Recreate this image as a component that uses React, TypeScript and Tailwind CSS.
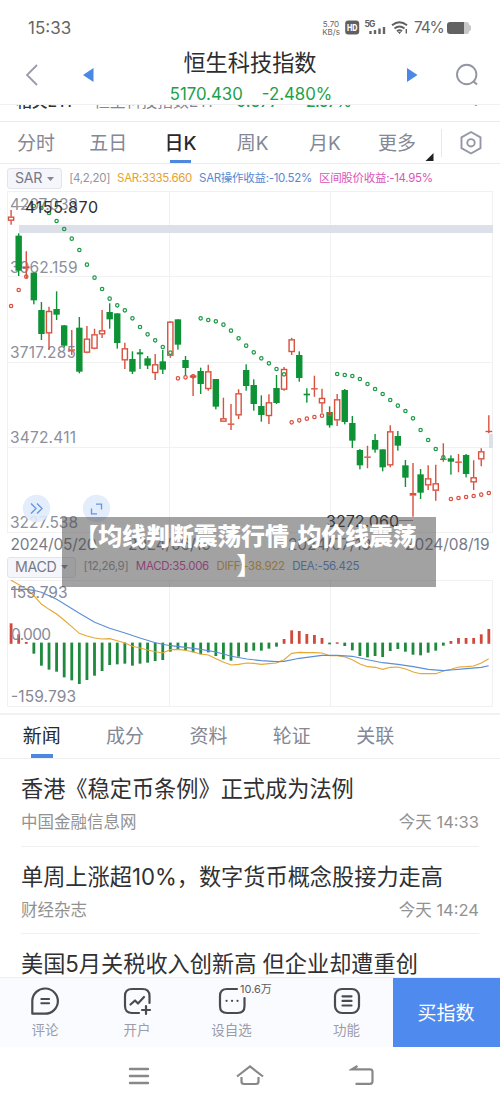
import React from "react";

type Candle = [kind: "r" | "g", top: number, bottom: number, high: number, low: number];

const STEP = 7.583;
const xAt = (i: number) => 11.1 + i * STEP;

const scale = (base: number, rows: Candle[]): Candle[] =>
  rows.map(([k, a, b, c, d]) => [k, base + a / 3, base + b / 3, base + c / 3, base + d / 3]);

const candles: Candle[] = [
  ...scale(190, [
    ["r", 80, 92, 60, 104], ["g", 137, 242, 130, 258], ["r", 229, 235, 184, 265], ["g", 248, 331, 248, 343],
    ["g", 360, 432, 336, 450], ["r", 363, 430, 350, 480], ["g", 357, 374, 304, 390], ["g", 406, 467, 405, 472],
    ["r", 478, 482, 420, 495], ["g", 413, 545, 381, 550], ["r", 446, 488, 408, 490], ["r", 433, 476, 416, 478],
    ["r", 421, 433, 360, 444], ["g", 366, 388, 340, 416], ["g", 370, 459, 370, 476], ["r", 475, 511, 458, 537],
    ["g", 507, 545, 484, 552], ["g", 487, 493, 477, 537], ["g", 505, 527, 498, 537], ["r", 523, 549, 492, 570],
    ["g", 514, 539, 480, 552],
  ]),
  ...scale(290, [
    ["r", 95, 197, 93, 203], ["g", 88, 164, 88, 179], ["g", 210, 234, 198, 258], ["r", 256, 263, 252, 318],
    ["g", 243, 282, 233, 312], ["r", 244, 297, 224, 302], ["g", 267, 350, 267, 358], ["r", 385, 395, 323, 395],
    ["r", 401, 404, 342, 420], ["r", 310, 376, 298, 387], ["g", 240, 288, 223, 302], ["g", 285, 342, 268, 362],
    ["g", 348, 375, 316, 395], ["r", 337, 378, 313, 402], ["g", 294, 339, 255, 342], ["r", 237, 299, 231, 302],
    ["r", 148, 186, 143, 195], ["g", 195, 264, 184, 275], ["g", 311, 316, 295, 338], ["r", 295, 298, 257, 320],
    ["r", 324, 340, 296, 368],
  ]),
  ...scale(350, [
    ["g", 186, 226, 169, 233], ["r", 148, 211, 132, 228], ["g", 120, 216, 117, 223], ["g", 219, 272, 198, 294],
    ["g", 300, 346, 297, 358], ["r", 320, 323, 287, 355], ["g", 270, 299, 252, 308], ["g", 298, 352, 298, 364],
    ["r", 244, 346, 226, 352], ["g", 258, 287, 243, 302], ["g", 346, 383, 330, 411], ["r", 429, 437, 339, 500],
    ["g", 373, 428, 357, 447], ["r", 385, 406, 346, 420], ["r", 400, 422, 344, 452], ["r", 326, 330, 280, 335],
    ["g", 325, 335, 316, 374], ["r", 335, 338, 312, 367], ["g", 315, 372, 312, 382], ["r", 382, 397, 331, 420],
    ["r", 304, 328, 295, 349], ["r", 243, 246, 196, 250],
  ]),
];

const sarRuns: { color: string; start: number; base: number; ys: number[] }[] = [
  { color: "#d9503f", start: 0, base: 190, ys: [348, 300, 260] },
  { color: "#1c9a46", start: 3, base: 190, ys: [48, 54, 69, 93, 117, 146, 180, 224, 263, 297, 326, 346, 361, 385, 411, 433, 451, 471, 488] },
  { color: "#d9503f", start: 22, base: 290, ys: [265, 262, 259] },
  { color: "#1c9a46", start: 25, base: 290, ys: [85, 90, 94, 104, 122, 145, 167, 187, 205, 220, 237, 253] },
  { color: "#d9503f", start: 37, base: 290, ys: [397, 391, 386, 381, 377, 372] },
  { color: "#1c9a46", start: 43, base: 350, ys: [72, 75, 78, 87, 102, 117, 132, 150, 167, 183, 205, 240, 270, 297, 322] },
  { color: "#d9503f", start: 58, base: 350, ys: [447, 444, 441, 438, 434, 429] },
];

const macdEnds = [
  160, 193, 216, 251, 287, 299, 305, 322, 331, 342, 330, 317, 303, 285, 283, 281, 287, 281, 278, 273, 270, 245, 237,
  240, 247, 253, 247, 258, 268, 272, 260, 246, 242, 242, 236, 230, 207, 181, 183, 192, 195, 204, 223, 217, 228, 241,
  258, 262, 258, 261, 243, 237, 245, 254, 256, 248, 242, 227, 213, 204, 204, 204, 193, 177,
];

const diff = [
  [33, 31], [57, 44], [79, 57], [101, 76], [124, 102], [147, 118], [170, 132], [192, 150], [215, 170], [238, 190],
  [261, 198], [284, 204], [306, 207], [329, 206], [352, 212], [375, 219], [397, 229], [420, 234], [443, 240],
  [466, 245], [488, 249], [511, 239], [534, 238], [557, 241], [580, 246], [602, 252], [625, 255], [648, 266],
  [671, 277], [694, 285], [716, 283], [740, 279], [761, 280], [784, 283], [807, 281], [829, 279], [852, 269],
  [875, 250], [898, 247], [920, 248], [943, 248], [966, 249], [989, 257], [1012, 257], [1035, 261], [1057, 269],
  [1080, 282], [1103, 290], [1126, 292], [1148, 298], [1171, 292], [1194, 291], [1217, 297], [1240, 306], [1262, 311],
  [1285, 311], [1308, 311], [1330, 303], [1353, 298], [1376, 291], [1399, 290], [1421, 288], [1444, 279], [1466, 266],
];
const dea = [
  [33, 58], [79, 58], [101, 61], [124, 67], [170, 88], [238, 130], [284, 157], [329, 175], [375, 189], [420, 204],
  [466, 218], [511, 227], [557, 232], [602, 238], [648, 246], [694, 259], [740, 267], [784, 272], [829, 275],
  [852, 274], [898, 265], [943, 259], [966, 256], [1012, 256], [1057, 259], [1103, 269], [1148, 278], [1194, 283],
  [1240, 290], [1285, 298], [1330, 302], [1353, 300], [1399, 296], [1444, 292], [1466, 287],
];
const toPoints = (pts: number[][]) => pts.map(([x, y]) => `${x / 3},${570 + y / 3}`).join(" ");

function PriceChart() {
  return (
    <svg width="500" height="365" viewBox="0 190 500 365" className="block shrink-0">
      <g stroke="#f1f1f4" fill="none">
        <rect x="7.5" y="191.5" width="485" height="341" />
        <path d="M169.5 192V532M330.5 192V532M8 276.5H492M8 362.5H492M8 447.5H492" />
      </g>
      <rect x="19" y="225" width="474" height="8" fill="#dbe0e9" />
      <rect x="489" y="434" width="4" height="14" fill="#dbe0e9" />
      <g fontSize="15.5" fill="#8d8f9c">
        <text x="10" y="209.5" textLength="68">4207.033</text>
        <text x="10" y="273" textLength="67.5">3962.159</text>
        <text x="10" y="358" textLength="66">3717.285</text>
        <text x="10" y="443" textLength="66">3472.411</text>
        <text x="10" y="528.3" textLength="68">3227.538</text>
      </g>
      {candles.map(([kind, top, bottom, high, low], i) => {
        const x = xAt(i);
        if (kind === "g") {
          return (
            <g key={i} fill="#0d9236">
              <rect x={x - 0.7} y={high} width="1.4" height={low - high} />
              <rect x={x - 3.2} y={top} width="6.4" height={bottom - top} />
            </g>
          );
        }
        const thin = bottom - top < 3;
        return (
          <g key={i} stroke="#d9503f" strokeWidth="1.4" fill={thin ? "#d9503f" : "white"}>
            <path d={`M${x} ${high}V${top}M${x} ${bottom}V${low}`} />
            {thin ? (
              <path d={`M${x - 3.3} ${(top + bottom) / 2}H${x + 3.3}`} strokeWidth={Math.max(1.4, bottom - top)} />
            ) : (
              <rect x={x - 2.6} y={top + 0.5} width="5.2" height={bottom - top - 1} />
            )}
          </g>
        );
      })}
      {sarRuns.map((run) =>
        run.ys.map((y, j) => (
          <circle key={`${run.start}-${j}`} cx={xAt(run.start + j)} cy={run.base + y / 3} r="1.7" fill="none" stroke={run.color} strokeWidth="1.2" />
        )),
      )}
      <path d="M16 206.5H27M399 520.5H413" stroke="#9a9a9a" />
      <g fontSize="16" fill="#2e2e30">
        <text x="25" y="212.5" textLength="73">4155.870</text>
        <text x="326" y="527" textLength="73">3272.060</text>
      </g>
      <g>
        <circle cx="36.5" cy="508.5" r="13.7" fill="#dfebfc" fillOpacity=".88" />
        <circle cx="96.5" cy="508.5" r="13.7" fill="#dfebfc" fillOpacity=".88" />
        <path d="M31 503.5l5 5-5 5M37 503.5l5 5-5 5M96 504.2h5.5v5.3M91.5 508.5v5.3h5.5" fill="none" stroke="#6096e4" strokeWidth="1.3" />
      </g>
      <g fontSize="15.5" fill="#787b8a">
        <text x="10.5" y="549.5" textLength="86">2024/05/20</text>
        <text x="128" y="549.5" textLength="83">2024/06/19</text>
        <text x="288" y="549.5" textLength="83">2024/07/19</text>
        <text x="405" y="549.5" textLength="84.5">2024/08/19</text>
      </g>
    </svg>
  );
}

function MacdChart() {
  return (
    <svg width="500" height="134" viewBox="0 579 500 134" className="block shrink-0">
      <g stroke="#f1f1f4" fill="none">
        <rect x="7.5" y="580.5" width="485" height="126" />
        <path d="M169.5 581V706M330.5 581V706" />
      </g>
      {macdEnds.map((v, i) => {
        const up = v < 220;
        const end = 570 + v / 3;
        return (
          <rect key={i} x={xAt(i) - 1.4} width="2.8" y={up ? end : 642.6} height={up ? 643.8 - end : end - 642.6} fill={up ? "#cf4a3d" : "#1f8a3e"} />
        );
      })}
      <polyline points={toPoints(diff)} fill="none" stroke="#e5a833" strokeWidth="1.1" />
      <polyline points={toPoints(dea)} fill="none" stroke="#5b8fd8" strokeWidth="1.1" />
      <g fontSize="15.5" fill="#878996">
        <text x="10.5" y="598" textLength="57">159.793</text>
        <text x="11" y="639.5" textLength="40">0.000</text>
        <text x="11" y="702" textLength="65">-159.793</text>
      </g>
    </svg>
  );
}

function StatusBar() {
  return (
    <div className="flex h-12 items-center pl-7 pr-7 pt-2 text-[#666]">
      <span className="text-[17px] leading-none">15:33</span>
      <div className="ml-auto flex items-center">
        <div className="w-[18px] text-center text-[8px] leading-[8px]">
          <div>5.70</div>
          <div>KB/s</div>
        </div>
        <svg width="70" height="18" viewBox="340 19 70 18">
          <rect x="345.2" y="20.5" width="14" height="14" rx="3" fill="#606060" />
          <text x="347" y="31" fontSize="9" fontWeight="800" fill="white" textLength="10.5" lengthAdjust="spacingAndGlyphs">HD</text>
          <text x="364.5" y="27.3" fontSize="8.5" fontWeight="700" fill="#606060" textLength="11">5G</text>
          <path d="M370.5 34v-3M375 34v-4M379.5 34v-5.5M384 34v-7" stroke="#666" strokeWidth="2.4" />
          <g fill="none" stroke="#606060" strokeWidth="2">
            <path d="M392 25.3q7.5-6 15 0M394.5 28.5q5-4 10 0M397 31.3q2.5-2 5 0" />
            <path d="M398.5 32.5h2l-1 1z" fill="#606060" strokeWidth="1" />
            <path d="M406.3 29v4.5" strokeWidth="1.4" />
          </g>
        </svg>
        <span className="ml-[4px] w-[28px] text-[15.5px] leading-none tracking-[-1.2px]">74%</span>
        <svg width="26" height="14" viewBox="0 0 26 14" className="ml-[4px]">
          <path d="M18 1h3q2 0 2 2.5l2 1.5v4l-2 1.5q0 2.5-2 2.5h-3z" fill="#c8c8c8" />
          <path d="M4 1h14v12H4q-3 0-3-3V4q0-3 3-3z" fill="#626262" />
        </svg>
      </div>
    </div>
  );
}

function Header() {
  return (
    <div className="flex h-[57px] items-start justify-between border-b border-[#f0f0f0] pl-6 pr-[22px]">
      <div className="flex w-[130px] items-center gap-[43px] pt-[15px]">
        <svg width="16" height="24" viewBox="0 0 16 24"><path d="M13 2L3 12l10 10" fill="none" stroke="#9a9cab" strokeWidth="1.8" /></svg>
        <svg width="12" height="16" viewBox="0 0 12 16"><path d="M10.5 1v14L0 8z" fill="#4a88e5" /></svg>
      </div>
      <div className="flex flex-col items-center">
        <h1 className="-ml-[2px] text-[22.2px] leading-[30px] text-[#2d2d2f]">恒生科技指数</h1>
        <div className="mt-[5px] flex gap-[19px] text-[16.8px] leading-[22px] text-[#1ca049]">
          <span>5170.430</span>
          <span>-2.480%</span>
        </div>
      </div>
      <div className="flex w-[130px] items-center justify-end gap-[38px] pt-[15px]">
        <svg width="12" height="16" viewBox="0 0 12 16"><path d="M1 1v14L11.5 8z" fill="#4a88e5" /></svg>
        <svg width="22" height="24" viewBox="0 0 22 24"><path d="M17 18l4 3.5" stroke="#9395a3" strokeWidth="2" /><circle cx="10.7" cy="11.5" r="9.7" fill="none" stroke="#9395a3" strokeWidth="1.9" /></svg>
      </div>
    </div>
  );
}

function Tag({ children }: { children: string }) {
  return (
    <div className="flex h-[21px] items-center gap-[4.5px] rounded-[3px] border border-[#e2e3ed] bg-[#f5f6fb] px-[7px] text-[14.2px] leading-none text-[#767987]">
      {children}
      <svg width="7" height="4" viewBox="0 0 7 4"><path d="M0 0h7L3.5 4z" fill="#858895" /></svg>
    </div>
  );
}

const periods = ["分时", "五日", "日K", "周K", "月K", "更多"];

function PeriodTabs() {
  return (
    <div className="flex h-[43px] shrink-0 items-stretch border-y border-[#ececf0] text-[19px] text-[#848795]">
      {periods.map((p, i) => (
        <div key={p} className={`relative flex w-[72.2px] items-center justify-center pt-[4px] ${i === 2 ? "font-medium text-[#28282a]" : ""}`}>
          {p}
          {i === 2 && <span className="absolute bottom-0 h-[3px] w-[21px] bg-[#4d88dc]" />}
        </div>
      ))}
      <div className="flex flex-1 items-center">
        <svg width="9" height="41" viewBox="0 0 9 41" className="-ml-[8px]"><path d="M8.5 31v8H.5z" fill="#202020" /></svg>
        <div className="ml-[7px] h-7 border-l border-[#e7e7f0]" />
        <svg width="24" height="26" viewBox="0 0 24 26" className="ml-[17px]" fill="none" stroke="#9597a5" strokeWidth="1.9">
          <path d="M12 2l9.5 5.3v10.8L12 23.5l-9.5-5.4V7.3z" /><circle cx="12" cy="12.8" r="3.7" />
        </svg>
      </div>
    </div>
  );
}

const news = [
  { title: "香港《稳定币条例》正式成为法例", source: "中国金融信息网", time: "今天 14:33" },
  { title: "单周上涨超10%，数字货币概念股接力走高", source: "财经杂志", time: "今天 14:24" },
];

function BottomBar() {
  const item = "flex flex-col items-center pt-[9px] text-[13.5px] leading-[18px] text-[#9a9ca9]";
  const line = { fill: "none", stroke: "#4b4b4d", strokeWidth: 2.2, strokeLinecap: "round" as const, strokeLinejoin: "round" as const };
  return (
    <div className="flex h-[70px] shrink-0 border-t border-[#eeeff5] bg-[#fafbff]">
      <div className={`${item} w-[90px]`}>
        <svg width="30" height="30" viewBox="0 0 30 30" {...line}><path d="M2.3 26.7V13.6A12.8 12.6 0 1 1 15 26.7z" /><path d="M11.3 12.1h7.8M11.3 16.2h7.8" strokeWidth="2" /></svg>
        <span className="mt-[4px]">评论</span>
      </div>
      <div className={`${item} w-[94px]`}>
        <svg width="30" height="30" viewBox="0 0 30 30" {...line}><path d="M17 26H10q-7 0-7-7V9q0-7 7-7h10.5q7 0 7 7v7M8.5 17.5l4.5-4 3 3 6-6.5" /><path d="M24 19v8M20 23h8" /></svg>
        <span className="mt-[4px]">开户</span>
      </div>
      <div className={`${item} relative w-[95px]`}>
        <svg width="30" height="30" viewBox="0 0 30 30" {...line}><path d="M20 2H10Q3 2 3 9v10q0 7 7 7h10.5q7 0 7-7V11" /><path d="M9.5 13.8h.1M15 13.8h.1M20.5 13.8h.1" /></svg>
        <span className="mt-[4px]">设自选</span>
        <span className="absolute left-[56px] top-[3px] whitespace-nowrap text-[11px] leading-[16px] text-[#5c5c60]">10.6万</span>
      </div>
      <div className={`${item} ml-[21px] w-[93px]`}>
        <svg width="30" height="30" viewBox="0 0 30 30" {...line}><rect x="3" y="2" width="24" height="24" rx="7" /><path d="M10.5 9.3h9M10.5 13.9h9M10.5 18.5h9" /></svg>
        <span className="mt-[4px]">功能</span>
      </div>
      <div className="flex flex-1 items-center justify-center bg-[#4f8bee] pr-[1px] pt-[4px] text-[19px] text-white">买指数</div>
    </div>
  );
}

export default function App() {
  return (
    <div className="relative flex h-[1105px] w-[500px] flex-col overflow-hidden bg-white font-['Inter','Noto_Sans_CJK_SC',sans-serif]">
      <StatusBar />
      <Header />
      <div className="flex h-[16px] shrink-0 items-end overflow-hidden">
        <div className="mb-[8.5px] flex w-full items-baseline whitespace-nowrap pl-[16px] text-[15.8px] leading-[22px]">
          <span className="w-[78px] font-medium text-[#333]">相关ETF</span>
          <span className="w-[142px] text-[#858794]">恒生科技指数ETF</span>
          <span className="w-[64px] font-medium text-[#1ca049]">0.677</span>
          <span className="font-medium tracking-[-0.8px] text-[#1ca049]">-2.67%</span>
          <span className="ml-auto mr-[20px] text-[#858794]">›</span>
        </div>
      </div>
      <PeriodTabs />
      <div className="flex h-[26px] shrink-0 items-center whitespace-nowrap pl-[7px] pt-[3px] text-[11.5px] tracking-[-0.3px]">
        <Tag>SAR</Tag>
        <span className="ml-[7.5px] text-[#92949e]">[4,2,20]</span>
        <span className="ml-[7px] text-[#e5a12d]">SAR:3335.660</span>
        <span className="ml-[7px] text-[#5489d6]">SAR操作收益:-10.52%</span>
        <span className="ml-[7px] text-[#d956b8]">区间股价收益:-14.95%</span>
      </div>
      <PriceChart />
      <div className="flex h-[24px] shrink-0 items-center whitespace-nowrap pl-[7px] text-[11.5px] tracking-[-0.3px]">
        <Tag>MACD</Tag>
        <span className="ml-[7.5px] text-[#92949e]">[12,26,9]</span>
        <span className="ml-[7.5px] text-[#d63dad]">MACD:35.006</span>
        <span className="ml-[7.5px] text-[#e5a12d]">DIFF:-38.922</span>
        <span className="ml-[7.5px] text-[#5489d6]">DEA:-56.425</span>
      </div>
      <MacdChart />
      <div className="flex h-[46px] shrink-0 border-b border-t-2 border-b-[#efeff2] border-t-[#f1f1f4] text-[19px] text-[#848795]">
        {["新闻", "成分", "资料", "轮证", "关联"].map((t, i) => (
          <div key={t} className={`relative flex w-[83.4px] justify-center pt-[8px] leading-[28px] ${i === 0 ? "text-[#29292b]" : ""}`}>
            {t}
            {i === 0 && <span className="absolute bottom-0 h-[4px] w-[22px] bg-[#4d88e0]" />}
          </div>
        ))}
      </div>
      <div className="flex h-[218px] shrink-0 flex-col overflow-hidden px-[21px]">
        {news.map((n) => (
          <div key={n.title} className="h-[87.5px] shrink-0 border-b border-[#f0f0f0] pt-[14px]">
            <div className="whitespace-nowrap text-[22.2px] leading-[32px] text-[#303032]">{n.title}</div>
            <div className="mt-[5px] flex justify-between text-[16.5px] leading-[24px] text-[#929292]">
              <span>{n.source}</span>
              <span>{n.time}</span>
            </div>
          </div>
        ))}
        <div className="whitespace-nowrap pt-[14px] text-[22.2px] leading-[32px] text-[#303032]">美国5月关税收入创新高 但企业却遭重创</div>
      </div>
      <BottomBar />
      <div className="flex h-[58px] items-center justify-center gap-[84px] pl-[1px]">
        <svg width="24" height="24" viewBox="0 0 24 24" stroke="#888" strokeWidth="2.4" strokeLinecap="round"><path d="M3 5h18M3 12h18M3 19h18" /></svg>
        <svg width="30" height="24" viewBox="0 0 30 24" fill="none" stroke="#888" strokeWidth="2.2"><path d="M2 12.5L15 2.5l13 10M6.5 13v4.5q0 2.5 2.5 2.5h12q2.5 0 2.5-2.5V13" /></svg>
        <svg width="26" height="24" viewBox="0 0 26 24" fill="none" stroke="#888" strokeWidth="2.2"><path d="M8.5 2L3 5.3h18q2.5 0 2.5 2.5v9.5q0 2.5-2.5 2.5H6.5" /></svg>
      </div>
      <div className="absolute left-[62px] top-[517px] h-[70px] w-[374px] bg-[rgba(70,70,70,0.5)] pr-[7px] pt-[5px] text-center text-[24px] font-black leading-[29px] tracking-[-0.2px] text-white">
        <div>【均线判断震荡行情,均价线震荡</div>
        <div className="pl-[6px]">】</div>
      </div>
    </div>
  );
}
